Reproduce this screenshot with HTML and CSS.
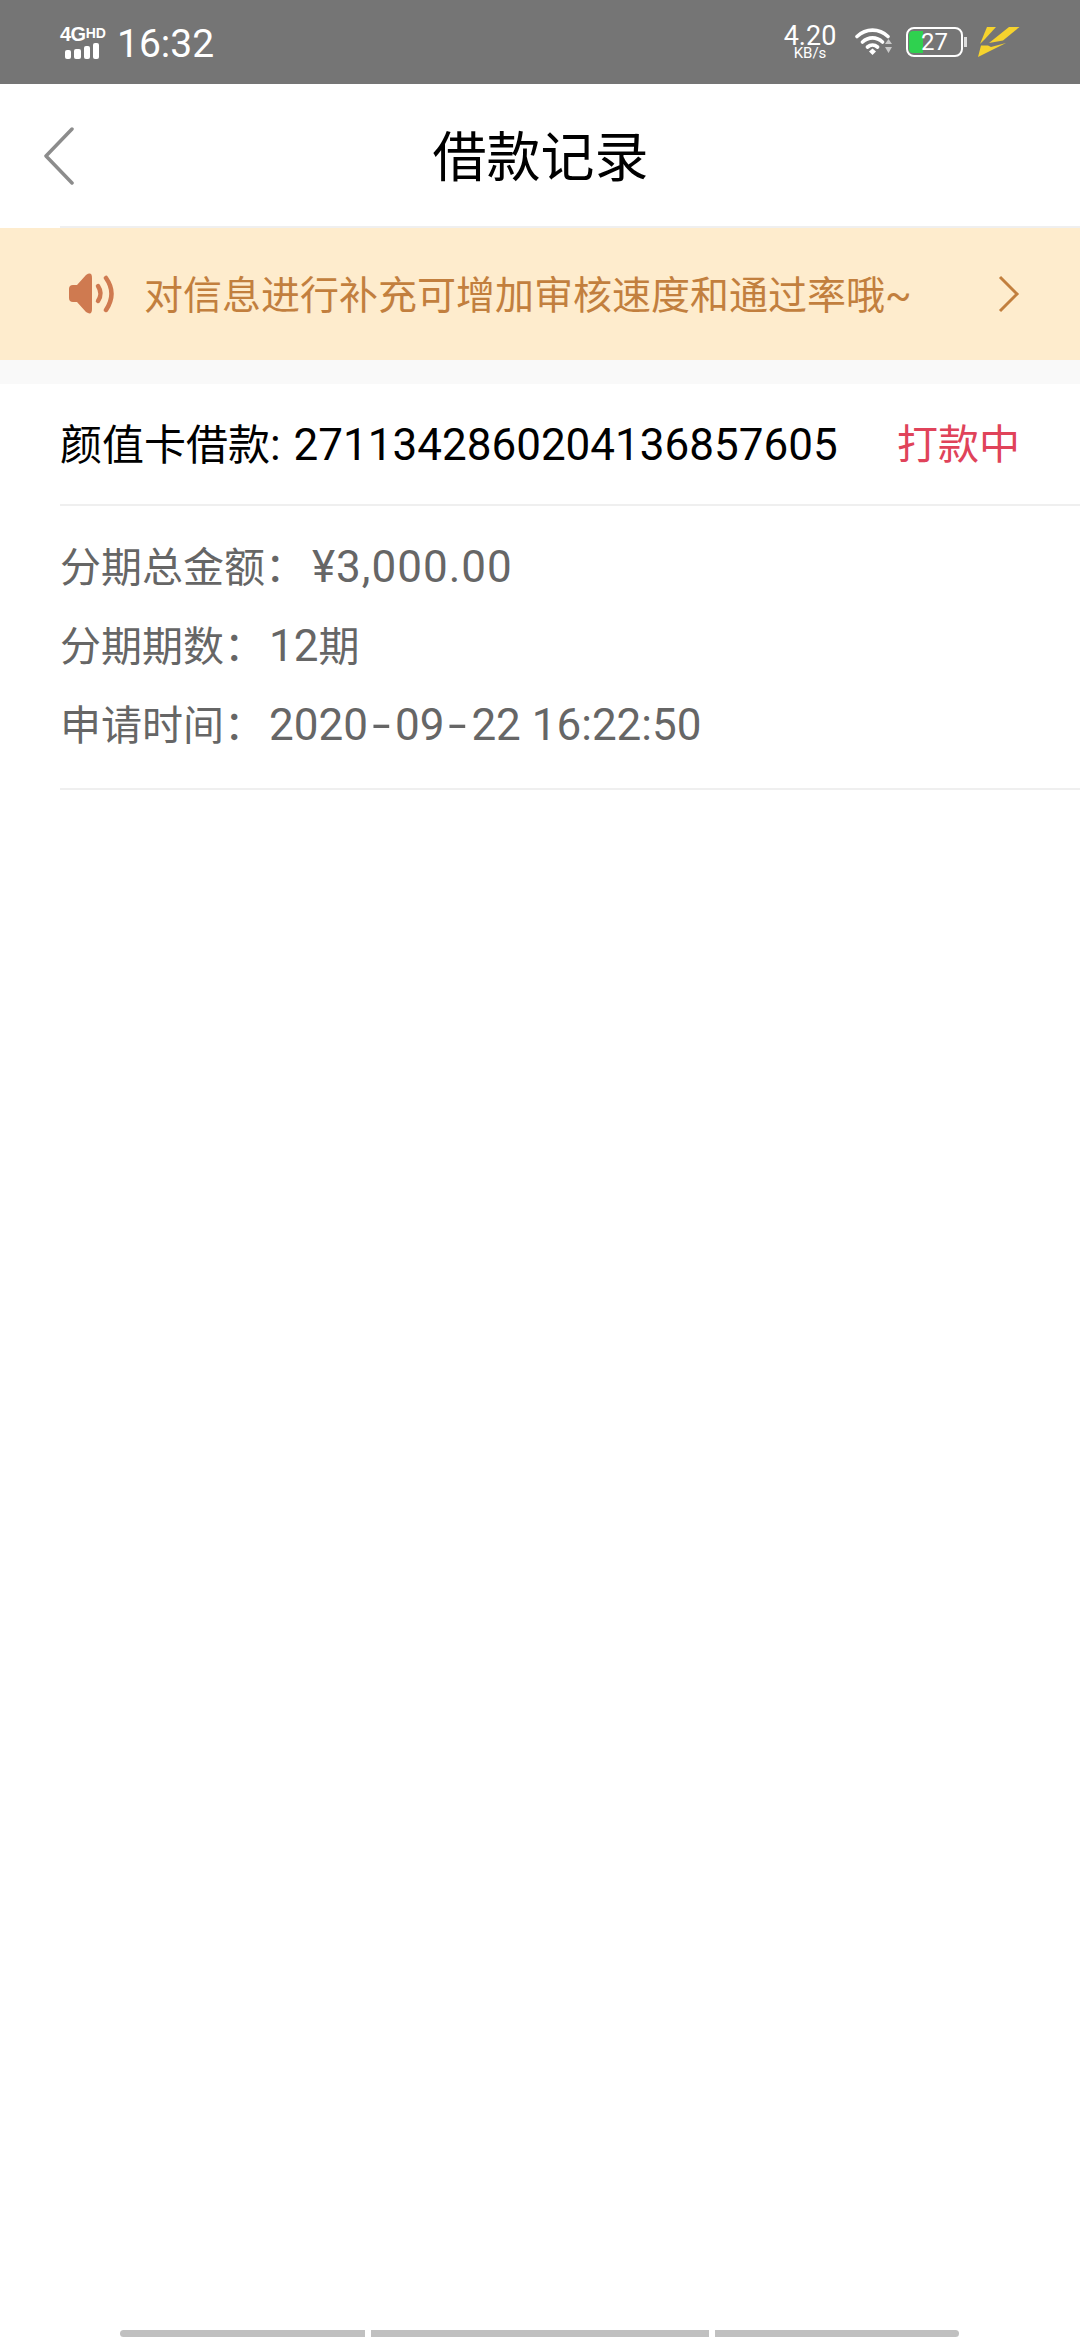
FILE: index.html
```html
<!doctype html>
<html>

<head>
	<meta charset="UTF-8">
	<title>借款记录</title>
	<link rel="stylesheet" href="styles.css">
</head>

<body>
	<div class="status_bar">
		<div class="status_left">
			<div class="signal">
				<div class="signal_txt">4G<small>HD</small></div>
				<div class="signal_bars"><i class="b1"></i><i class="b2"></i><i class="b3"></i><i class="b4"></i></div>
			</div>
			<span class="clock">16:32</span>
		</div>
		<div class="status_right">
			<div class="speed"><b>4.20</b><small>KB/s</small></div>
			<svg class="wifi" width="38" height="30" viewBox="0 0 38 30">
				<path d="M2 9.5C11 1 24 1 33 9.5M7.5 15C13.5 9.5 21.5 9.5 27.5 15M12.5 20C15.5 17.5 19.5 17.5 22.5 20" fill="none" stroke="#fff" stroke-width="3.6" stroke-linecap="round"/>
				<path d="M14 24.5L17.5 21.5L21 24.5L17.5 28Z" fill="#fff"/>
				<path d="M30 17H37L33.5 12ZM30 20H37L33.5 26Z" fill="#c9c9c9"/>
			</svg>
			<div class="battery">
				<div class="battery_level"></div>
				<span>27</span>
			</div>
			<div class="battery_tip"></div>
			<svg class="bolt" width="46" height="34" viewBox="0 0 46 34">
				<path d="M11 2H20L9 14L4 19Z" fill="#f6d32d"/>
				<path d="M33 2H43.5L27 15.5L13 18Z" fill="#f6d32d"/>
				<path d="M5 20.5H12L15 22L30 18L2 32Z" fill="#f6d32d"/>
			</svg>
		</div>
	</div>

	<div class="nav_bar">
		<svg class="back" width="30" height="58" viewBox="0 0 30 58">
			<path d="M28 2L2 29L28 56" fill="none" stroke="#8c8c8c" stroke-width="3.5" stroke-linecap="round" stroke-linejoin="round"/>
		</svg>
		<h1>借款记录</h1>
	</div>
	<div class="nav_line"></div>

	<div class="notice">
		<svg class="horn" width="48" height="42" viewBox="0 0 48 42">
			<path d="M1 16Q1 12 5 12H9L18 2Q24 -2 24 5V36Q24 43 18 39L9 29H5Q1 29 1 25Z" fill="#cf7a50"/>
			<path d="M30 13Q35 20.5 30 28" fill="none" stroke="#cf7a50" stroke-width="4.5" stroke-linecap="round"/>
			<path d="M38 5Q49 20.5 38 37" fill="none" stroke="#cf7a50" stroke-width="4.5" stroke-linecap="round"/>
		</svg>
		<span class="notice_txt">对信息进行补充可增加审核速度和通过率哦~</span>
		<svg class="arrow" width="22" height="38" viewBox="0 0 22 38">
			<path d="M2 2L19 19L2 36" fill="none" stroke="#c27f3e" stroke-width="3"/>
		</svg>
	</div>
	<div class="gap"></div>

	<div class="record">
		<div class="record_head">
			<span class="record_no">颜值卡借款<span class="num">:&nbsp;<span class="order_no">2711342860204136857605</span></span></span>
			<span class="record_state">打款中</span>
		</div>
		<div class="record_info">
			<p>分期总金额：<span class="num val money">¥3,000.00</span></p>
			<p>分期期数：<span class="num val">12</span>期</p>
			<p>申请时间：<span class="num val">2020<span class="dash">-</span>09<span class="dash">-</span>22 16:22:50</span></p>
		</div>
	</div>

	<div class="home_bar">
		<i class="seg_l"></i><i class="seg_m"></i><i class="seg_r"></i>
	</div>
</body>

</html>

```

FILE: styles.css
```css
* {
	box-sizing: border-box;
}

html,body {
	margin: 0;
	height: 2340px;
	overflow: hidden;
	background: #fff;
}

body {
	position: relative;
	font-family: Roboto, "Noto Sans CJK SC", sans-serif;
}

/*状态栏*/
.status_bar {
	height: 84px;
	background: #757575;
	color: #fff;
	display: flex;
	justify-content: space-between;
	align-items: center;
	padding: 0 58px 0 60px;
}

.status_left,.status_right {
	display: flex;
	align-items: center;
}

.signal {
	width: 48px;
	margin-right: 9px;
}

.signal_txt {
	font: bold 20px/15px "Liberation Sans", sans-serif;
	white-space: nowrap;
	letter-spacing: -0.5px;
}

.signal_txt small {
	font-size: 14px;
	vertical-align: 3px;
	letter-spacing: 0;
}

.signal_bars {
	display: flex;
	align-items: flex-end;
	gap: 3px;
	height: 17px;
	margin: 0 0 0 5px;
}

.signal_bars i {
	width: 6px;
	background: #fff;
	border-radius: 2px;
}

.b1 {
	height: 9px;
}

.signal_bars .b2 {
	height: 10px;
	width: 7px;
}

.b3 {
	height: 13px;
}

.b4 {
	height: 16px;
}

.clock {
	font-size: 39px;
	padding-top: 3px;
}

.speed {
	width: 54px;
	margin-right: 18px;
	text-align: center;
	line-height: 1;
}

.speed b {
	display: block;
	font-weight: 400;
	font-size: 27px;
	line-height: 22px;
}

.speed small {
	display: block;
	font-size: 15px;
	line-height: 13px;
}

.wifi {
	margin-right: 13px;
}

.battery {
	position: relative;
	width: 57px;
	height: 30px;
	border: 2px solid #fff;
	border-radius: 8px;
	font-size: 24px;
	line-height: 26px;
	text-align: center;
}

.battery span {
	position: relative;
}

.battery_level {
	position: absolute;
	left: 1px;
	top: 2px;
	bottom: 2px;
	width: 14px;
	background: #2fd14f;
	border-radius: 4px 0 0 4px;
}

.battery_tip {
	width: 3px;
	height: 10px;
	background: #ddd;
	margin: 0 9px 0 1px;
}

/*标题栏*/
.nav_bar {
	position: relative;
	height: 142px;
	display: flex;
	align-items: center;
	justify-content: center;
	padding-bottom: 4px;
}

.nav_bar h1 {
	margin: 0 0 0 1px;
	font-size: 54px;
	font-weight: 400;
	color: #000;
}

.back {
	position: absolute;
	left: 44px;
	top: 43px;
}

.nav_line {
	height: 2px;
	margin-left: 60px;
	background: #efefef;
}

/*提示条*/
.notice {
	height: 132px;
	background: #feeccd;
	display: flex;
	align-items: center;
	padding-left: 68px;
}

.horn {
	margin-right: 28px;
}

.notice_txt {
	flex: 1;
	font-size: 39px;
	color: #c27f3e;
	padding-bottom: 4px;
}

.arrow {
	margin-right: 60px;
}

.gap {
	height: 24px;
	background: #f9f9f9;
}

/*记录*/
.record {
	margin-left: 60px;
}

.record_head {
	height: 122px;
	display: flex;
	justify-content: space-between;
	align-items: center;
	padding: 0 60px 6px 0;
	border-bottom: 2px solid #efefef;
}

.record_no {
	color: #000;
	font-size: 42px;
}

.order_no {
	margin-left: 2px;
}

.record_state {
	color: #e0435a;
	font-size: 41px;
}

.record_info {
	height: 284px;
	padding-top: 22px;
	border-bottom: 2px solid #efefef;
	font-size: 41px;
	color: #666;
}

.record_info p {
	margin: 0;
	height: 79px;
	line-height: 79px;
}

.num {
	font-size: 44px;
}

.val {
	margin-left: 4px;
}

.money {
	margin-left: 6px;
	letter-spacing: 1px;
}

.dash {
	display: inline-block;
	width: 27px;
	text-align: center;
	transform: scaleX(1.5);
}

/*底部手势条*/
.home_bar {
	position: absolute;
	left: 120px;
	top: 2330px;
	display: flex;
	gap: 6px;
}

.home_bar i {
	height: 7px;
	background: #c0c0c0;
}

.seg_l {
	width: 245px;
	border-radius: 4px 0 0 4px;
}

.seg_m {
	width: 338px;
}

.seg_r {
	width: 244px;
	border-radius: 0 4px 4px 0;
}

```
